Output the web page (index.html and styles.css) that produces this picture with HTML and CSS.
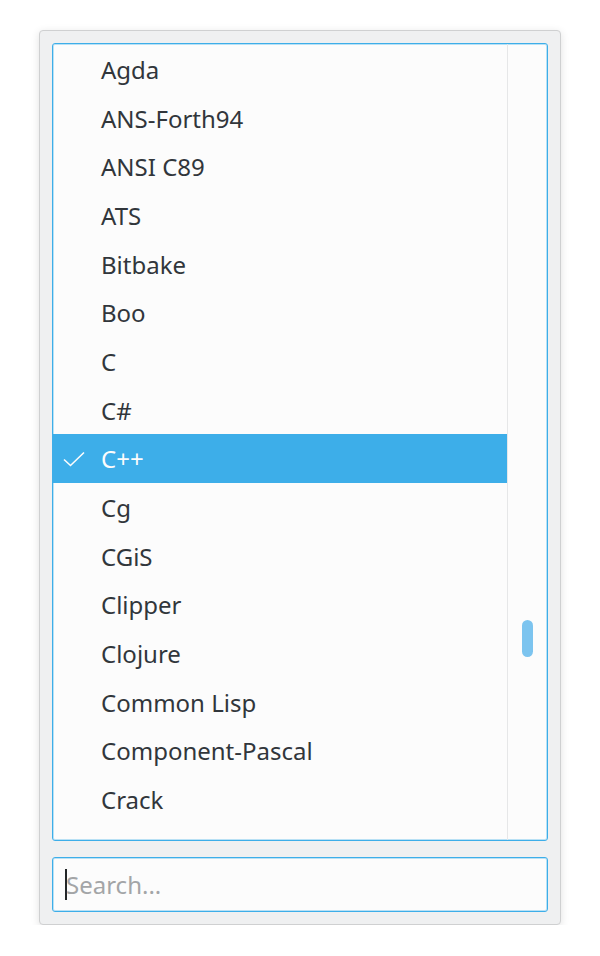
FILE: index.html
```html
<!DOCTYPE html>
<html lang="en">
  <head>
    <meta charset="UTF-8" />
    <meta name="viewport" content="width=device-width, initial-scale=1.0" />
    <title>Language picker</title>
    <link rel="stylesheet" href="styles.css">
  </head>
  <body>
    <div class="popup">
      <div class="lista">
        <ul class="itens">
          <li>Agda</li>
          <li>ANS-Forth94</li>
          <li>ANSI C89</li>
          <li>ATS</li>
          <li>Bitbake</li>
          <li>Boo</li>
          <li>C</li>
          <li>C#</li>
          <li class="ativo">
            <svg class="check" width="24" height="18" viewBox="0 0 24 18">
              <path d="M2 9.5 L8.5 15.5 L22 2.5" fill="none" stroke="#fcfcfc" stroke-width="1.6" />
            </svg>
            C++
          </li>
          <li>Cg</li>
          <li>CGiS</li>
          <li>Clipper</li>
          <li>Clojure</li>
          <li>Common Lisp</li>
          <li>Component-Pascal</li>
          <li>Crack</li>
        </ul>
        <div class="barra">
          <div class="polegar"></div>
        </div>
      </div>
      <div class="busca">
        <span class="cursor"></span>
        <span class="placeholder">Search...</span>
      </div>
    </div>
  </body>
</html>
```

FILE: styles.css
```css
body {
  margin: 0;
  background-color: #ffffff;
  font-family: "Noto Sans", sans-serif;
  color: #31363b;
}

.popup {
  box-sizing: border-box;
  width: 522px;
  margin: 30px 0 0 39px;
  padding: 12px;
  background-color: #eff0f1;
  border: 1px solid #cfd0d1;
  border-radius: 4px;
  box-shadow: 0 2px 8px rgba(0, 0, 0, 0.12);
  display: flex;
  flex-direction: column;
  gap: 16px;
}

.lista {
  display: flex;
  height: 798px;
  box-sizing: border-box;
  border: 1px solid #3daee9;
  box-shadow: inset 0 0 0 1px rgba(61, 174, 233, 0.35);
  border-radius: 3px;
  background-color: #fcfcfc;
  overflow: hidden;
}

.itens {
  flex: 1;
  list-style: none;
  margin: 0;
  padding: 1px 0 0 0;
  border-right: 1px solid #e6e7e8;
}

.itens li {
  position: relative;
  height: 48.67px;
  line-height: 50px;
  padding-left: 48px;
  font-size: 24px;
}

.itens li.ativo {
  background-color: #3daee9;
  color: #fcfcfc;
}

.check {
  position: absolute;
  left: 9px;
  top: 16px;
}

.barra {
  width: 39px;
  padding-top: 576px;
  display: flex;
  justify-content: center;
}

.polegar {
  width: 11px;
  height: 37px;
  border-radius: 6px;
  background-color: #7cc4ef;
}

.busca {
  box-sizing: border-box;
  height: 55px;
  border: 1px solid #3daee9;
  box-shadow: inset 0 0 0 1px rgba(61, 174, 233, 0.35);
  border-radius: 3px;
  background-color: #fcfcfc;
  display: flex;
  align-items: center;
  padding-left: 12px;
  font-size: 24px;
}

.cursor {
  width: 2px;
  height: 31px;
  background-color: #232627;
}

.placeholder {
  color: #a3a5a7;
  margin-left: -1px;
}
```
